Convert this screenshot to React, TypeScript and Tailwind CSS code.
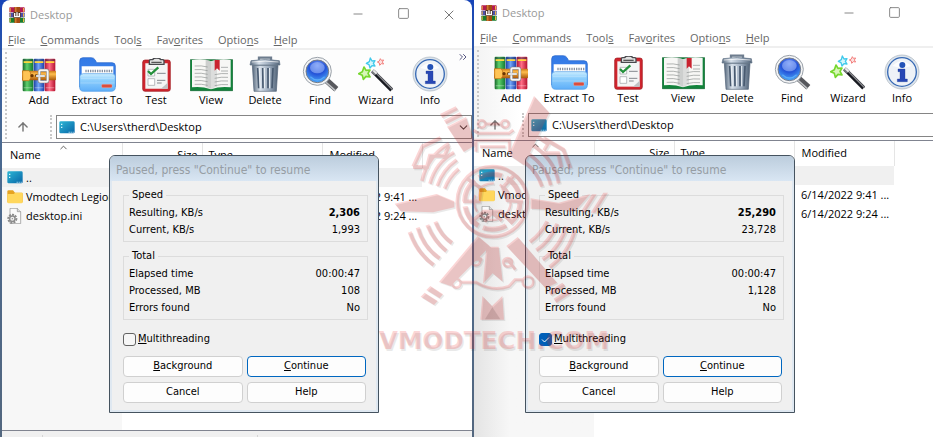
import { useState } from 'react';
import type { ReactNode } from 'react';
import clsx from 'clsx';
import { ArrowUp, ChevronDown, ChevronsRight, ChevronUp, Minus, Square, X } from 'lucide-react';

interface SpeedInfo {
  resulting: string;
  current: string;
  elapsed: string;
  processed: string;
  errors: string;
}

const MENU = [
  ['', 'F', 'ile'],
  ['', 'C', 'ommands'],
  ['Tool', 's', ''],
  ['Fav', 'o', 'rites'],
  ['Optio', 'n', 's'],
  ['', 'H', 'elp'],
];

function BooksIcon({ size }: { size: number }) {
  return (
    <svg width={size} height={size} viewBox="0 0 102 102">
      <defs>
        <linearGradient id="bkGreen">
          <stop offset="0" stopColor="#17672b" />
          <stop offset=".4" stopColor="#5fd06c" />
          <stop offset="1" stopColor="#127a30" />
        </linearGradient>
        <linearGradient id="bkBlue">
          <stop offset="0" stopColor="#1b3fa0" />
          <stop offset=".45" stopColor="#6fa4f7" />
          <stop offset="1" stopColor="#1c3da8" />
        </linearGradient>
        <linearGradient id="bkRed">
          <stop offset="0" stopColor="#b01436" />
          <stop offset=".45" stopColor="#ff6d85" />
          <stop offset="1" stopColor="#b5122f" />
        </linearGradient>
        <linearGradient id="bkBelt" x1="0" y1="0" x2="0" y2="1">
          <stop offset="0" stopColor="#c87416" />
          <stop offset=".35" stopColor="#ffbe4d" />
          <stop offset="1" stopColor="#a85508" />
        </linearGradient>
      </defs>
      <rect x="2" y="2" width="32" height="98" rx="3" fill="url(#bkGreen)" />
      <rect x="35" y="2" width="32" height="98" rx="3" fill="url(#bkBlue)" />
      <rect x="68" y="2" width="32" height="98" rx="3" fill="url(#bkRed)" />
      <path d="M4 4h28v5H4zM37 4h28v5H37zM70 4h28v5H70z" fill="#1b2a44" opacity=".45" />
      <path d="M5 10h26v5H5zM38 10h26v5H38zM71 10h26v5H71z" fill="#ffd63c" />
      <path d="M5 88h26v3H5zM38 88h26v3H38zM71 88h26v3H71z" fill="#fff" opacity=".35" />
      <rect x="0" y="38" width="102" height="29" rx="3" fill="url(#bkBelt)" />
      <path d="M2 38h18c9 4 9 26 0 30H2z" fill="#ffc455" stroke="#b86b10" strokeWidth="2" />
      <circle cx="30" cy="53" r="5" fill="#6b3503" />
      <circle cx="43" cy="53" r="4" fill="#6b3503" />
      <rect x="52" y="37" width="25" height="34" rx="3" fill="none" stroke="#777" strokeWidth="9" />
      <rect x="52" y="37" width="25" height="34" rx="3" fill="none" stroke="#f5f5f5" strokeWidth="6" />
      <path d="M42 51h27v6H42z" fill="#f6f6f6" stroke="#777" />
    </svg>
  );
}

function AppLogo() {
  return (
    <svg width="16" height="16" viewBox="0 0 48 48">
      <rect x="1" y="1" width="46" height="15" rx="2" fill="#b21b50" />
      <rect x="1" y="17" width="46" height="14" rx="2" fill="#4b4fa8" />
      <rect x="1" y="32" width="46" height="15" rx="2" fill="#197b2c" />
      <path d="M2 3h3v11H2zM42 3h3v11h-3zM2 19h3v10H2zM42 19h3v10h-3zM2 34h3v11H2zM42 34h3v11h-3z" fill="#f4b942" />
      <rect x="16" y="0" width="17" height="48" fill="#a34c13" />
      <path d="M19 0h3v48h-3z" fill="#e7933b" />
      <rect x="13" y="15" width="22" height="18" rx="2" fill="#55341e" />
      <path d="M17 18v11h14V18M24 16v11" fill="none" stroke="#fff" strokeWidth="4" />
    </svg>
  );
}

function ExtractIcon() {
  return (
    <svg width="37" height="35" viewBox="0 0 111 105">
      <defs>
        <linearGradient id="fdFront" x1="0" y1="0" x2="0" y2="1">
          <stop offset="0" stopColor="#cdeeff" />
          <stop offset=".35" stopColor="#8fd0fd" />
          <stop offset="1" stopColor="#5eaef8" />
        </linearGradient>
        <linearGradient id="fdBack" x1="0" y1="0" x2="0" y2="1">
          <stop offset="0" stopColor="#3279e6" />
          <stop offset="1" stopColor="#4489ed" />
        </linearGradient>
      </defs>
      <path d="M2 90V12Q2 2 12 2h25q7 0 11 6l5 9h46q10 0 10 10v62z" fill="url(#fdBack)" stroke="#2261c8" strokeWidth="2" />
      <path d="M8 28h95v32H8z" fill="#fff" />
      <path d="M19 42h81" stroke="#8791a2" strokeWidth="8" strokeDasharray="4 3" />
      <path d="M2 59q1-9 11-9h86q10 0 10 9v31q0 13-13 13H14Q2 103 2 90z" fill="url(#fdFront)" stroke="#4b9ae6" strokeWidth="2" />
      <path d="M6 65h99M4 78h103" stroke="#fff" strokeWidth="2" opacity=".35" />
      <rect x="68" y="82" width="31" height="10" rx="3" fill="#dc4d3c" stroke="#f4c5bd" />
    </svg>
  );
}

function TestIcon() {
  return (
    <svg width="29" height="34" viewBox="0 0 87 102">
      <rect x="2" y="6" width="83" height="94" rx="7" fill="#cf252e" stroke="#9d161c" strokeWidth="2" />
      <path d="M10 16h67v76H10z" fill="#f4f5f5" />
      <path d="M57 92l20-18v18z" fill="#bfc3c5" />
      <path d="M22 19V9q0-4 4-4h6q2-5 12-5t12 5h6q4 0 4 4v10z" fill="#e2e2e2" stroke="#48494d" strokeWidth="4" />
      <path d="M28 13h31" stroke="#555" strokeWidth="4" />
      <path d="M18 34h20v20H18zM18 62h20v20H18z" fill="#fff" stroke="#9b9fa3" strokeWidth="2" />
      <path d="M18 39l9 9 22-20" fill="none" stroke="#23903b" strokeWidth="7" />
      <path d="M45 46h26M45 67h25M45 75h14" stroke="#85898e" strokeWidth="3" />
    </svg>
  );
}

function ViewIcon() {
  return (
    <svg width="43" height="34" viewBox="0 0 129 102">
      <path d="M1 5h127v93H1z" fill="#12833b" stroke="#0b602b" strokeWidth="2" />
      <path d="M6 6q34-6 57 4 30-10 59-4v82q-32-4-59 6-29-10-57-6z" fill="#f7f7f5" />
      <path d="M47 5q11 0 17 6v82q-8-5-17-6z" fill="#acaead" opacity=".55" />
      <path d="M64 10q8-5 17-6v82q-9 1-17 8z" fill="#c6c8c7" opacity=".55" />
      <path d="M14 24q20-2 39 3M14 35q20-2 39 3M14 46q20-2 39 3M14 57q20-2 39 3M14 68q20-2 39 3M14 79q20-2 39 3M74 50q20-5 40-3M74 61q20-5 40-3M74 72q20-5 40-3M74 83q20-5 40-3M93 28h21M93 39h21" fill="none" stroke="#8d9190" strokeWidth="2" />
      <path d="M74 6h15v32l-8-7-7 7z" fill="#c9232f" />
    </svg>
  );
}

function DeleteIcon() {
  return (
    <svg width="32" height="36" viewBox="0 0 96 108">
      <defs>
        <linearGradient id="binBody">
          <stop offset="0" stopColor="#55677b" />
          <stop offset=".3" stopColor="#d8e1eb" />
          <stop offset=".65" stopColor="#9cabbd" />
          <stop offset="1" stopColor="#506276" />
        </linearGradient>
      </defs>
      <path d="M30 14V5h36v9" fill="none" stroke="#6e7d8e" strokeWidth="7" />
      <path d="M10 28h77l-5 78H15z" fill="url(#binBody)" stroke="#526277" strokeWidth="2" />
      <path d="M26 36l3 61M41 36l1 61M57 36v61M72 36l-3 61" stroke="#485a70" strokeWidth="5" />
      <path d="M31 36l3 61M46 36l1 61M62 36v61" stroke="#edf2f6" strokeWidth="3" />
      <path d="M6 14q43-7 85 0l2 13H3z" fill="url(#binBody)" stroke="#617287" strokeWidth="2" />
      <path d="M8 18q41-5 81 0" fill="none" stroke="#fff" strokeWidth="3" opacity=".7" />
    </svg>
  );
}

function FindIcon() {
  return (
    <svg width="37" height="36" viewBox="0 0 111 108">
      <defs>
        <radialGradient id="lens" cx=".5" cy=".25" r=".75">
          <stop offset="0" stopColor="#7095f5" />
          <stop offset=".5" stopColor="#2554d8" />
          <stop offset="1" stopColor="#4aa7fa" />
        </radialGradient>
      </defs>
      <path d="M73 73l30 27" stroke="#57585d" strokeWidth="18" />
      <path d="M71 78l29 26" stroke="#bec0c3" strokeWidth="5" />
      <circle cx="46" cy="46" r="42" fill="#f3f4f5" stroke="#9ba2aa" strokeWidth="3" />
      <circle cx="46" cy="46" r="34" fill="url(#lens)" stroke="#777d88" strokeWidth="3" />
      <ellipse cx="46" cy="35" rx="22" ry="17" fill="#b6cbff" opacity=".45" />
      <path d="M25 62q21 20 43 0" fill="none" stroke="#79d0ff" strokeWidth="4" opacity=".5" />
    </svg>
  );
}

function WizardIcon() {
  return (
    <svg width="36" height="35" viewBox="0 0 108 105">
      <g strokeLinejoin="round">
        <path d="M37 3l5 9 9-1-5 8 5 8-9-1-6 7-3-10-8-4 9-5z" fill="#d5f6fc" stroke="#40c9eb" strokeWidth="4" />
        <path d="M18 30l6 10 12-1-6 10 6 11-12-2-8 9-3-12-11-5 11-6z" fill="#d8f7b8" stroke="#76d72e" strokeWidth="5" />
        <path d="M67 5l3 5 7-1-4 6 4 6-7-1-5 5-1-7-6-3 6-3z" fill="#fde0df" stroke="#f38280" strokeWidth="3" />
      </g>
      <path d="M45 43l56 56" stroke="#181a20" strokeWidth="12" />
      <path d="M49 43l55 55" stroke="#8b8c90" strokeWidth="4" />
      <path d="M43 41l11 11" stroke="#77797d" strokeWidth="13" />
      <path d="M46 40l10 10" stroke="#eee" strokeWidth="6" />
    </svg>
  );
}

function InfoIcon() {
  return (
    <svg width="36" height="36" viewBox="0 0 108 108">
      <circle cx="54" cy="54" r="51" fill="#dce4ec" stroke="#a7b2bd" strokeWidth="2" />
      <circle cx="54" cy="54" r="43" fill="#eef2f7" stroke="#3769b4" strokeWidth="4" />
      <path d="M25 36q27-28 57 0Q56 45 25 36z" fill="#fff" opacity=".8" />
      <circle cx="55" cy="33" r="9" fill="#2453b7" />
      <path d="M42 45h21v30h7v8H40v-8h8V53h-6z" fill="#2747b5" stroke="#173b91" />
    </svg>
  );
}

function DesktopIcon() {
  return (
    <svg width="16" height="13" viewBox="0 0 48 39" className="shrink-0">
      <defs>
        <linearGradient id="desk" x2="1" y2="1">
          <stop offset="0" stopColor="#2cb6d5" />
          <stop offset="1" stopColor="#0865a7" />
        </linearGradient>
      </defs>
      <rect x="1" y="1" width="46" height="36" rx="4" fill="url(#desk)" />
      <path d="M6 8h4v4H6zM6 17h4v4H6zM29 32h3v3h-3zM35 32h3v3h-3zM41 32h3v3h-3z" fill="#d7f7ff" />
    </svg>
  );
}

function FolderIcon() {
  return (
    <svg width="16" height="14" viewBox="0 0 48 42" className="shrink-0">
      <path d="M1 37V4q0-3 4-3h13l6 7h20q3 0 3 4v25z" fill="#e5a322" />
      <path d="M1 12h19l5-4h22v29q0 3-4 3H5q-4 0-4-3z" fill="#ffd75d" />
    </svg>
  );
}

function IniIcon() {
  return (
    <svg width="16" height="16" viewBox="0 0 48 48" className="shrink-0">
      <path d="M9 1h22l10 10v36H9z" fill="#fafafa" stroke="#8c8c8c" strokeWidth="2" />
      <path d="M31 1v10h10" fill="#ddd" stroke="#8c8c8c" strokeWidth="2" />
      <circle cx="16" cy="32" r="12" fill="none" stroke="#8c8c8c" strokeWidth="6" strokeDasharray="6 3" />
      <circle cx="16" cy="32" r="8" fill="#eee" stroke="#8c8c8c" strokeWidth="4" />
      <circle cx="16" cy="32" r="2" fill="#8c8c8c" />
    </svg>
  );
}

const TOOLS = [
  { label: 'Add', icon: <BooksIcon size={34} />, width: 'w-[52px]' },
  { label: 'Extract To', icon: <ExtractIcon />, width: 'w-[64px]' },
  { label: 'Test', icon: <TestIcon />, width: 'w-[54px]' },
  { label: 'View', icon: <ViewIcon />, width: 'w-[56px]' },
  { label: 'Delete', icon: <DeleteIcon />, width: 'w-[52px]' },
  { label: 'Find', icon: <FindIcon />, width: 'w-[58px]' },
  { label: 'Wizard', icon: <WizardIcon />, width: 'w-[54px]' },
  { label: 'Info', icon: <InfoIcon />, width: 'w-[54px]' },
];

function GroupBox({ title, rows }: { title: string; rows: { label: string; value: string; bold?: boolean }[] }) {
  return (
    <fieldset className="border border-[#dcdcdc] pl-[5px] pr-[7px] pt-px pb-[3px]">
      <legend className="px-[3px] leading-4">{title}</legend>
      <dl>
        {rows.map(row => (
          <div key={row.label} className="flex justify-between leading-[17px]">
            <dt>{row.label}</dt>
            <dd className={clsx(row.bold && 'font-bold')}>{row.value}</dd>
          </div>
        ))}
      </dl>
    </fieldset>
  );
}

function DialogButton({ primary, children }: { primary?: boolean; children: ReactNode }) {
  return (
    <button type="button" className={clsx('h-[21px] rounded bg-[#fdfdfd] border', primary ? 'border-[#0067c0]' : 'border-[#d0d0d0]')}>
      {children}
    </button>
  );
}

function ProgressDialog({ info, multithreading, className }: { info: SpeedInfo; multithreading: boolean; className: string }) {
  const [checked, setChecked] = useState(multithreading);

  return (
    <section
      role="dialog"
      className={clsx(
        "absolute w-[270px] rounded-t-md border border-[#45535f] bg-[#f0f0f0] text-[11px] text-black overflow-hidden font-['DejaVu_Sans_Condensed','DejaVu_Sans',sans-serif]",
        className,
      )}
    >
      <h2 className="h-[25px] px-[6px] leading-7 text-xs text-[#969da4] bg-linear-to-b from-[#bccddd] to-[#d9e6f3] whitespace-nowrap">
        Paused, press "Continue" to resume
      </h2>
      <div className="border-x-2 border-b-2 border-[#dfe8f1] pl-[11px] pr-2 pt-[6px] pb-[7px]">
        <div className="flex flex-col gap-[6px]">
          <GroupBox
            title="Speed"
            rows={[
              { label: 'Resulting, KB/s', value: info.resulting, bold: true },
              { label: 'Current, KB/s', value: info.current },
            ]}
          />
          <GroupBox
            title="Total"
            rows={[
              { label: 'Elapsed time', value: info.elapsed },
              { label: 'Processed, MB', value: info.processed },
              { label: 'Errors found', value: info.errors },
            ]}
          />
        </div>
        <label className="mt-[11px] flex w-fit items-center gap-[2px] leading-4">
          <span className="relative flex">
            <input
              type="checkbox"
              checked={checked}
              onChange={e => setChecked(e.target.checked)}
              className="size-[13px] appearance-none rounded-[3px] border border-[#626262] bg-[#f6f6f6] checked:border-[#005fb8] checked:bg-[#005fb8]"
            />
            {checked && (
              <svg viewBox="0 0 13 13" className="pointer-events-none absolute inset-0 size-[13px]">
                <path d="M3 6.5l2.5 2.5 4.5-4.5" fill="none" stroke="#fff" />
              </svg>
            )}
          </span>
          <span><u>M</u>ultithreading</span>
        </label>
        <div className="mt-[9px] mr-[2px] grid grid-cols-2 gap-x-1 gap-y-[5px]">
          <DialogButton><u>B</u>ackground</DialogButton>
          <DialogButton primary><u>C</u>ontinue</DialogButton>
          <DialogButton>Cancel</DialogButton>
          <DialogButton>Help</DialogButton>
        </div>
      </div>
    </section>
  );
}

function FileList({ shaded }: { shaded?: boolean }) {
  const nameBg = shaded ? 'bg-linear-to-r from-[#e4e4e4] to-[#f7f7f7] to-30%' : 'bg-[#f7f7f7]';
  const files = [
    { name: '..', icon: <DesktopIcon />, modified: '' },
    { name: 'Vmodtech Legion', icon: <FolderIcon />, modified: '6/14/2022 9:41 ...' },
    { name: 'desktop.ini', icon: <IniIcon />, modified: '6/14/2022 9:24 ...' },
  ];

  return (
    <div className="flex flex-1 flex-col">
      <table className="w-[420px] table-fixed border-collapse text-left whitespace-nowrap">
        <colgroup>
          <col className="w-[120px]" />
          <col className="w-[80px]" />
          <col className="w-[120px]" />
          <col className="w-[100px]" />
        </colgroup>
        <thead>
          <tr className="h-[25px]">
            <th className="relative border-r border-[#e5e5e5] pl-2 font-normal">
              Name
              <ChevronUp size={11} strokeWidth={2} className="absolute left-14 -top-px text-[#555]" />
            </th>
            <th className="border-r border-[#e5e5e5] pr-1 text-right font-normal">Size</th>
            <th className="border-r border-[#e5e5e5] pl-[6px] font-normal">Type</th>
            <th className="border-r border-[#e5e5e5] pl-[7px] font-normal">Modified</th>
          </tr>
        </thead>
        <tbody>
          {files.map((file, i) => (
            <tr key={file.name} className={clsx('h-[19px]', i === 0 && 'bg-[#f0f0f0]')}>
              <td className={clsx('p-0 pl-[5px]', i > 0 && nameBg)}>
                <span className="flex items-center gap-[3px] leading-[19px]">{file.icon}{file.name}</span>
              </td>
              <td className="p-0" />
              <td className="p-0" />
              <td className="p-0 pl-[7px] leading-[19px]">{file.modified}</td>
            </tr>
          ))}
        </tbody>
      </table>
      <div className={clsx('w-[120px] flex-1', nameBg)} />
    </div>
  );
}

function ArchiverWindow({ partial, info }: { partial?: boolean; info: SpeedInfo }) {
  return (
    <main className={clsx(
      'relative flex min-w-0 flex-col bg-white text-black overflow-hidden',
      partial ? '-mt-[2px]' : 'rounded-t-lg',
    )}>
      <header className="flex h-[30px] items-center pl-[7px] text-[#999]">
        <AppLogo />
        <h1 className="ml-[5px] flex-1 pt-px">Desktop</h1>
        <div className={clsx('flex text-[#777]', partial && 'pr-4')}>
          <button type="button" aria-label="Minimize" className="flex w-[45px] justify-center"><Minus size={14} strokeWidth={1.5} /></button>
          <button type="button" aria-label="Maximize" className="flex w-[46px] justify-center"><Square size={13} strokeWidth={1.6} /></button>
          {!partial && <button type="button" aria-label="Close" className="flex w-[46px] justify-center"><X size={16} strokeWidth={1.5} /></button>}
        </div>
      </header>
      <nav className="flex h-5 items-center gap-[15px] border-b-2 border-[#efefef] pl-[6px] pt-[2px] text-[#666]">
        {MENU.map(([before, key, after]) => (
          <button key={before + key + after} type="button">{before}<u>{key}</u>{after}</button>
        ))}
      </nav>
      <div className={clsx('flex pt-[2px] pb-[3px]', partial ? 'bg-linear-to-r from-[#f3f3f3] to-white to-10%' : 'bg-[#fdfdfd]')}>
        <div className="ml-[3px] w-0 border-l-2 border-dotted border-[#c8c8c8]" />
        <div className="relative min-w-0 flex-1">
          <div className="flex h-[63px] pl-[6px]">
            {TOOLS.map(tool => (
              <button key={tool.label} type="button" className={clsx('flex shrink-0 flex-col items-center whitespace-nowrap', tool.width)}>
                <span className="flex h-10 items-end">{tool.icon}</span>
                <span className="leading-4">{tool.label}</span>
              </button>
            ))}
          </div>
          {!partial && <ChevronsRight size={12} strokeWidth={2} className="absolute right-[3px] -top-px text-[#555580]" />}
          <div className="flex h-6 items-stretch">
            <button type="button" aria-label="Up one level" className="flex w-[43px] items-center justify-center pr-[11px] text-[#777]">
              <ArrowUp size={14} strokeWidth={2.5} />
            </button>
            <div className="w-[6px] border-l-2 border-dotted border-[#c8c8c8]" />
            <div className={clsx('flex min-w-0 flex-1 items-center gap-[5px] border border-[#858585] bg-white pl-[2px]', partial && 'border-r-0')}>
              <DesktopIcon />
              <input type="text" aria-label="Path" defaultValue="C:\Users\therd\Desktop" className="min-w-0 flex-1 bg-transparent outline-none" />
              {!partial && (
                <button type="button" aria-label="Path history" className="flex w-4 justify-center text-[#444]">
                  <ChevronDown size={13} strokeWidth={2} />
                </button>
              )}
            </div>
          </div>
        </div>
      </div>
      <div className="h-[1px] border-[#808490] border-t bg-[#e5e5e5]" />
      <FileList shaded={partial} />
      {!partial && (
        <footer className="flex h-[7px] border-t border-[#808490] bg-[#f0f0f0]">
          <span className="mt-1 w-[41px] border-r border-[#d5d5d5]" />
          <span className="mt-1 w-[215px] border-r border-[#d5d5d5]" />
        </footer>
      )}
      <ProgressDialog
        info={info}
        multithreading={!!partial}
        className={partial ? 'left-[51px] top-[157px]' : 'left-[107px] top-[155px]'}
      />
    </main>
  );
}

function Watermark() {
  return (
    <svg width="250" height="280" viewBox="0 0 750 840" className="pointer-events-none absolute left-[370px] top-[80px]">
      <defs>
        <g id="emblem">
          <g fill="none" stroke="currentColor">
            <circle cx="367" cy="365" r="105" strokeWidth="11" />
            <circle cx="367" cy="365" r="83" strokeWidth="15" strokeDasharray="72 15" />
            <circle cx="367" cy="365" r="55" strokeWidth="7" strokeDasharray="52 18" />
            <path d="M292 296l41 28-6 40h-48M433 285l-35 38 14 38 47 4M300 429l41-34h52l35 35M344 425l22-27 30 24" strokeWidth="11" />
            <path d="M180 311q18-65 72-93M202 318q16-49 58-78M224 326q13-35 42-59M156 303q17-76 81-112" strokeWidth="11" />
            <path d="M480 190q72 43 86 120M473 220q54 35 69 96M464 247q37 28 52 73M503 171l31 20-12 20" strokeWidth="11" />
            <path d="M119 456q22 63 72 99M143 443q18 61 66 92M172 435q20 49 57 78M196 425q16 41 50 64" strokeWidth="12" />
            <path d="M615 450q-20 70-76 112M589 440q-20 64-71 99M562 431q-22 53-63 80M532 424q-20 39-52 62" strokeWidth="12" />
            <path d="M130 260l28-61 54-25M129 261h42l9-34h44l12-29M520 174l60 35 21 56M515 220h49l10 43" strokeWidth="12" />
            <path d="M318 215v-34h100v34M330 200h76M326 160h90M345 132h50M310 150l18 12M430 150l-16 12" strokeWidth="9" />
            <path d="M270 607h48q50 30 99 12l18-20h26M337 538h-46l-16 21M398 543h18l20 26" strokeWidth="9" />
            <circle cx="335" cy="132" r="11" strokeWidth="8" />
            <circle cx="405" cy="132" r="11" strokeWidth="8" />
            <circle cx="259" cy="610" r="13" strokeWidth="8" />
            <circle cx="317" cy="542" r="14" strokeWidth="8" />
            <circle cx="413" cy="547" r="13" strokeWidth="8" />
            <circle cx="474" cy="606" r="16" strokeWidth="8" />
          </g>
          <path d="M210 102l47-23 7 11-47 24zM222 121l48-24 7 12-48 24zM231 140l57-29 29 84-36 21z" />
          <path d="M492 48l46 50-76 158-46-32z" />
          <path d="M74 371l126-29 53 22v18l-64 15-97-3z" />
          <path d="M482 355l84 13 95-26-45 51-134-7zM666 343h14l-34 53h-14zM700 338h14l-38 60h-14z" />
          <path d="M323 468l37 31-118 119-35-12zM443 471l-34 27 118 127 34-17z" />
          <path d="M152 650l12-12 39 25-11 12zM169 630l12-12 38 25-10 12zM535 635l42-27 9 11-42 28zM551 656l42-27 8 12-42 28z" />
          <path d="M349 500h37l12 105-30-25-29 31z" />
          <path d="M337 648l29 30 31-30 5 71H331z" />
        </g>
        <text
          id="brand"
          x="26"
          y="808"
          fontSize="74"
          fontWeight="700"
          className="font-['DejaVu_Sans',sans-serif]"
        >
          VMODTECH.COM
        </text>
      </defs>
      <g opacity=".1" fill="#333" color="#333" transform="translate(4 4)">
        <use href="#emblem" />
        <use href="#brand" />
      </g>
      <g opacity=".19" fill="#ee2a2a" color="#ee2a2a">
        <use href="#emblem" />
        <use href="#brand" />
      </g>
      <path d="M345 718l22-36 24 36z" fill="#402020" opacity=".15" />
    </svg>
  );
}

export default function App() {
  return (
    <div className="relative grid h-screen grid-cols-[470fr_459fr] gap-x-[2px] overflow-hidden bg-linear-to-b from-[#1744b8] via-[#4a6a92] via-30% to-[#53677f] pl-[2px] text-[11px] font-['Open_Sans',sans-serif]">
      <ArchiverWindow
        info={{ resulting: '2,306', current: '1,993', elapsed: '00:00:47', processed: '108', errors: 'No' }}
      />
      <ArchiverWindow
        partial
        info={{ resulting: '25,290', current: '23,728', elapsed: '00:00:47', processed: '1,128', errors: 'No' }}
      />
      <Watermark />
    </div>
  );
}
